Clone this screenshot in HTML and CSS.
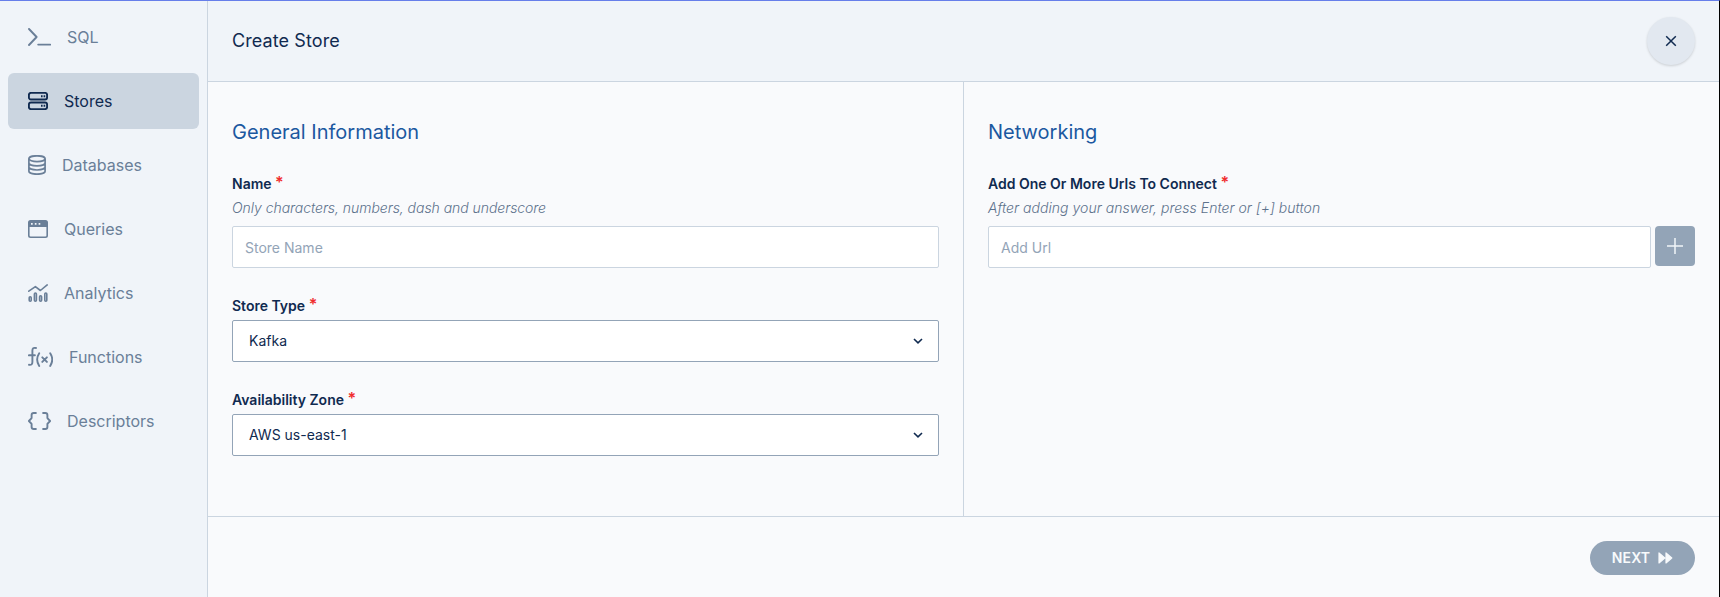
FILE: index.html
```html
<!DOCTYPE html>
<html lang="en">
<head>
<meta charset="utf-8">
<title>Create Store</title>
<link rel="stylesheet" href="styles.css">
</head>
<body>
<div class="app">
  <nav class="sidebar">
    <a class="nav-item"><svg width="23" height="18" viewBox="0 0 23 18" fill="none" stroke="currentColor" stroke-width="1.9" stroke-linecap="round" stroke-linejoin="round"><path d="M1 1l7.600 8L1 17M10.200 16.600h12"/></svg><span>SQL</span></a>
    <a class="nav-item active"><svg width="20" height="18" viewBox="0 0 20 18" fill="none" stroke="currentColor" stroke-width="1.9"><rect x=".9" y=".9" width="18.200" height="6.600" rx="2"/><rect x=".9" y="10.500" width="18.200" height="6.600" rx="2"/><path d="M13 4.200h1.600M15.600 4.200h1.600M13 13.800h1.600M15.600 13.800h1.600"/></svg><span>Stores</span></a>
    <a class="nav-item"><svg width="18" height="20" viewBox="0 0 18 20" fill="none" stroke="currentColor" stroke-width="1.7"><ellipse cx="9" cy="3.700" rx="8.100" ry="2.900"/><path d="M.9 3.700v12.600c0 1.600 3.600 2.900 8.100 2.900s8.100-1.300 8.100-2.900V3.700M.9 7.900c0 1.600 3.600 2.900 8.100 2.900s8.100-1.300 8.100-2.900M.9 12.100C.9 13.700 4.500 15 9 15s8.100-1.300 8.100-2.900"/></svg><span>Databases</span></a>
    <a class="nav-item"><svg width="20" height="18" viewBox="0 0 20 18"><path fill="currentColor" fill-rule="evenodd" d="M2.500 0h15A2.500 2.500 0 0 1 20 2.500v13a2.500 2.500 0 0 1-2.500 2.500h-15A2.500 2.500 0 0 1 0 15.500v-13A2.500 2.500 0 0 1 2.500 0zM1.600 7v8.400a1 1 0 0 0 1 1h14.800a1 1 0 0 0 1-1V7zM3 3v1.700h1.700V3zM6.800 3v1.700h1.700V3zM10.600 3v1.700h1.700V3z"/></svg><span>Queries</span></a>
    <a class="nav-item"><svg width="20" height="18" viewBox="0 0 20 18" fill="none" stroke="currentColor" stroke-width="1.600" stroke-linecap="round" stroke-linejoin="round"><path d="M.8 7.200L7.400 2.600l5 3.900L19.200.9"/><rect x="1.200" y="12.800" width="2" height="4.400" rx="1"/><rect x="6.400" y="9" width="2" height="8.200" rx="1"/><rect x="11.600" y="11.700" width="2" height="5.500" rx="1"/><rect x="16.800" y="9" width="2" height="8.200" rx="1"/></svg><span>Analytics</span></a>
    <a class="nav-item"><svg width="25" height="20" viewBox="0 0 25 20" fill="none" stroke="currentColor" stroke-width="1.900" stroke-linecap="round"><path d="M8 1c-2.600-.4-3.600.5-3.600 2.600v11.500c0 2-.9 3.100-3.400 2.700M.9 8.300h6M11.200 6.200c-2.600 4-2.600 8.700 0 12.800M22.200 6.200c2.600 4 2.600 8.700 0 12.800M14.300 10.300l4.600 4.600M18.900 10.300l-4.600 4.600"/></svg><span>Functions</span></a>
    <a class="nav-item"><svg width="23" height="18" viewBox="0 0 23 18" fill="none" stroke="currentColor" stroke-width="1.900" stroke-linecap="round" stroke-linejoin="round"><path d="M7.900 1H5.700Q3.600 1 3.600 3.100v3L.9 9l2.700 2.900v3Q3.600 17 5.700 17h2.200M15.100 1h2.200q2.100 0 2.100 2.100v3L22.100 9l-2.700 2.900v3q0 2.100-2.100 2.100h-2.200"/></svg><span>Descriptors</span></a>
  </nav>
  <main class="main">
    <header class="header">
      <h1 class="title">Create Store</h1>
      <button class="close" aria-label="Close"><svg width="12" height="12" viewBox="0 0 12 12" fill="none" stroke="currentColor" stroke-width="1.500"><path d="M1.200 1.200l9.600 9.600M10.800 1.200l-9.600 9.600"/></svg></button>
    </header>
    <div class="columns">
      <section class="column">
        <h2 class="heading">General Information</h2>
        <div class="field">
          <label class="label">Name <span class="required">*</span></label>
          <p class="hint hint-tight">Only characters, numbers, dash and underscore</p>
          <input class="input" placeholder="Store Name">
        </div>
        <div class="field">
          <label class="label">Store Type <span class="required">*</span></label>
          <div class="select"><span>Kafka</span><svg width="10" height="6" viewBox="0 0 10 6" fill="none" stroke="currentColor" stroke-width="1.600"><path d="M1 1l4 3.800L9 1"/></svg></div>
        </div>
        <div class="field">
          <label class="label">Availability Zone <span class="required">*</span></label>
          <div class="select"><span>AWS us-east-1</span><svg width="10" height="6" viewBox="0 0 10 6" fill="none" stroke="currentColor" stroke-width="1.600"><path d="M1 1l4 3.800L9 1"/></svg></div>
        </div>
      </section>
      <section class="column">
        <h2 class="heading">Networking</h2>
        <div class="field">
          <label class="label">Add One Or More Urls To Connect <span class="required">*</span></label>
          <p class="hint">After adding your answer, press Enter or [+] button</p>
          <div class="url-row">
            <input class="input" placeholder="Add Url">
            <button class="add" aria-label="Add"><svg width="16" height="16" viewBox="0 0 16 16" fill="none" stroke="currentColor" stroke-width="1.500"><path d="M8 0v16M0 8h16"/></svg></button>
          </div>
        </div>
      </section>
    </div>
    <footer class="footer">
      <button class="next"><span>NEXT</span><svg width="15" height="12" viewBox="0 0 15 12" fill="currentColor" stroke="currentColor" stroke-width="1.200" stroke-linejoin="round"><path d="M1 1v10L6.800 6zM8 1v10L13.800 6z"/></svg></button>
    </footer>
  </main>
</div>
</body>
</html>
```
FILE: styles.css
```css
* { box-sizing: border-box; }

body {
  margin: 0;
  font-family: Inter, "Liberation Sans", sans-serif;
  font-size: 14px;
  line-height: 20px;
  color: #102a50;
  background: #f9fafc;
}

h1, h2, p { margin: 0; font-weight: 400; }
button { border: 0; padding: 0; font: inherit; }

.app {
  display: flex;
  height: 597px;
  border-top: 1px solid #667eea;
  border-right: 1px solid #000;
}

.sidebar {
  flex: none;
  width: 208px;
  display: flex;
  flex-direction: column;
  gap: 8px;
  padding: 8px;
  background: #f0f4f9;
  border-right: 1px solid #cbd5e0;
}

.nav-item {
  display: flex;
  align-items: center;
  gap: 16px;
  height: 56px;
  padding-left: 20px;
  border-radius: 6px;
  font-size: 16px;
  color: #6a7f98;
}
.nav-item.active { background: #cbd5e0; color: #102a50; }
.nav-item svg { flex: none; }

.main { flex: 1; display: flex; flex-direction: column; }

.header {
  display: flex;
  align-items: center;
  justify-content: space-between;
  height: 81px;
  padding: 0 24px;
  background: #f0f4f9;
  border-bottom: 1px solid #cbd5e0;
}
.title { font-size: 18px; line-height: 28px; letter-spacing: 0.1px; }

.close {
  display: grid;
  place-items: center;
  width: 48px;
  height: 48px;
  border-radius: 50%;
  background: #e2e8f0;
  color: #102a50;
  box-shadow: 0 1px 3px rgba(0, 0, 0, .1), 0 1px 2px rgba(0, 0, 0, .06);
}

.columns { flex: 1; display: grid; grid-template-columns: 756px 1fr; }
.column { padding: 36px 24px 0; }
.column:first-child { border-right: 1px solid #cbd5e0; }

.heading {
  margin-bottom: 28px;
  font-size: 20px;
  line-height: 28px;
  color: #1c58a0;
}

.field { margin-bottom: 28px; }
.label { display: block; height: 20px; margin-bottom: 4px; font-weight: 600; }
.required {
  font-size: 16px;
  line-height: 0;
  vertical-align: 1.500px;
  color: #f02d2d;
}
.hint {
  margin-bottom: 8px;
  font-style: italic;
  font-weight: 300;
  letter-spacing: 0.03px;
  color: #5d728c;
}
.hint-tight { letter-spacing: -0.05px; }

.input {
  display: block;
  width: 100%;
  height: 42px;
  padding: 0 12px;
  border: 1px solid #cbd5e0;
  border-radius: 2px;
  background: #fff;
  font: inherit;
}
.input::placeholder { color: #93a4b7; }

.select {
  display: flex;
  align-items: center;
  justify-content: space-between;
  height: 42px;
  padding: 0 15px 0 16px;
  border: 1px solid #93a4b7;
  border-radius: 2px;
  background: #fff;
}

.url-row { display: flex; gap: 4px; }
.add {
  flex: none;
  display: grid;
  place-items: center;
  width: 40px;
  height: 40px;
  border-radius: 4px;
  background: #93a4b7;
  color: #f1f5f9;
}

.footer {
  display: flex;
  align-items: center;
  justify-content: flex-end;
  height: 81px;
  padding: 1px 24px 0;
  border-top: 1px solid #cbd5e0;
}
.next {
  display: flex;
  align-items: center;
  justify-content: center;
  gap: 8px;
  width: 105px;
  height: 34px;
  border-radius: 17px;
  background: #93a4b7;
  color: #f8fafc;
  font-weight: 600;
  letter-spacing: 0.1px;
}
```
